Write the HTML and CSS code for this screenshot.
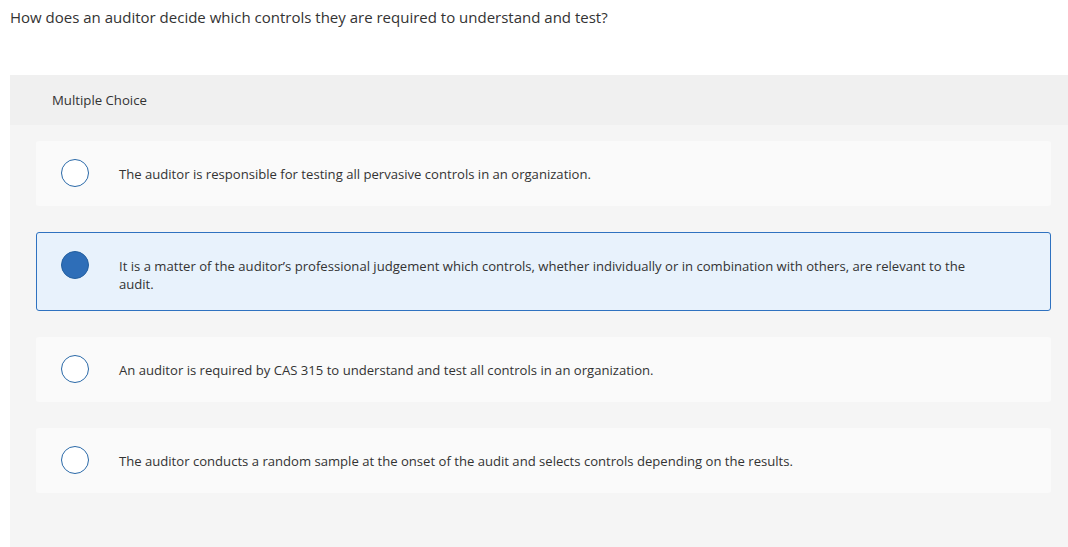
FILE: index.html
```html
<!DOCTYPE html>
<html lang="en">
<head>
    <meta charset="UTF-8">
    <title>Multiple Choice</title>
    <link rel="stylesheet" href="styles.css">
</head>
<body>
<div class="question">How does an auditor decide which controls they are required to understand and test?</div>
<div class="panel">
    <div class="panel-head">Multiple Choice</div>
    <ul class="choices">
        <li class="choice">
            <span class="radio"></span>
            <span class="choice-text">The auditor is responsible for testing all pervasive controls in an organization.</span>
        </li>
        <li class="choice selected">
            <span class="radio"></span>
            <span class="choice-text">It is a matter of the auditor’s professional judgement which controls, whether individually or in combination with others, are relevant to the audit.</span>
        </li>
        <li class="choice">
            <span class="radio"></span>
            <span class="choice-text">An auditor is required by CAS 315 to understand and test all controls in an organization.</span>
        </li>
        <li class="choice">
            <span class="radio"></span>
            <span class="choice-text">The auditor conducts a random sample at the onset of the audit and selects controls depending on the results.</span>
        </li>
    </ul>
</div>
</body>
</html>
```

FILE: styles.css
```css
body, ul, li {
    margin: 0;
    padding: 0;
    list-style: none;
}

body {
    font-family: "Open Sans", "Liberation Sans", sans-serif;
    color: #333;
    background: #fff;
    overflow: hidden;
}

.question {
    font-size: 15px;
    line-height: 18px;
    padding: 8px 10px 0;
    height: 75px;
    box-sizing: border-box;
}

.panel {
    margin-left: 10px;
    background: #f5f5f5;
    height: 480px;
}

.panel-head {
    height: 50px;
    line-height: 50px;
    padding-left: 42px;
    font-size: 13.2px;
    background: #f0f0f0;
}

.choices {
    padding: 16px 17px 0 26px;
}

.choice {
    display: flex;
    align-items: flex-start;
    background: #fafafa;
    border-radius: 3px;
    padding: 18px 20px 19px 25px;
    margin-bottom: 26px;
    font-size: 13.1px;
    line-height: 18px;
}

.choice.selected {
    background: #e8f2fc;
    border: 1px solid #2f72c0;
    padding: 18px 20px 17px 24px;
}

.radio {
    flex: none;
    width: 26px;
    height: 26px;
    border: 1px solid #2a69a8;
    border-radius: 50%;
    background: #fff;
}

.selected .radio {
    background: #2e6eb8;
    border-color: #235f9f;
}

.choice-text {
    margin: 6px 0 0 30px;
    padding-right: 60px;
}
```
